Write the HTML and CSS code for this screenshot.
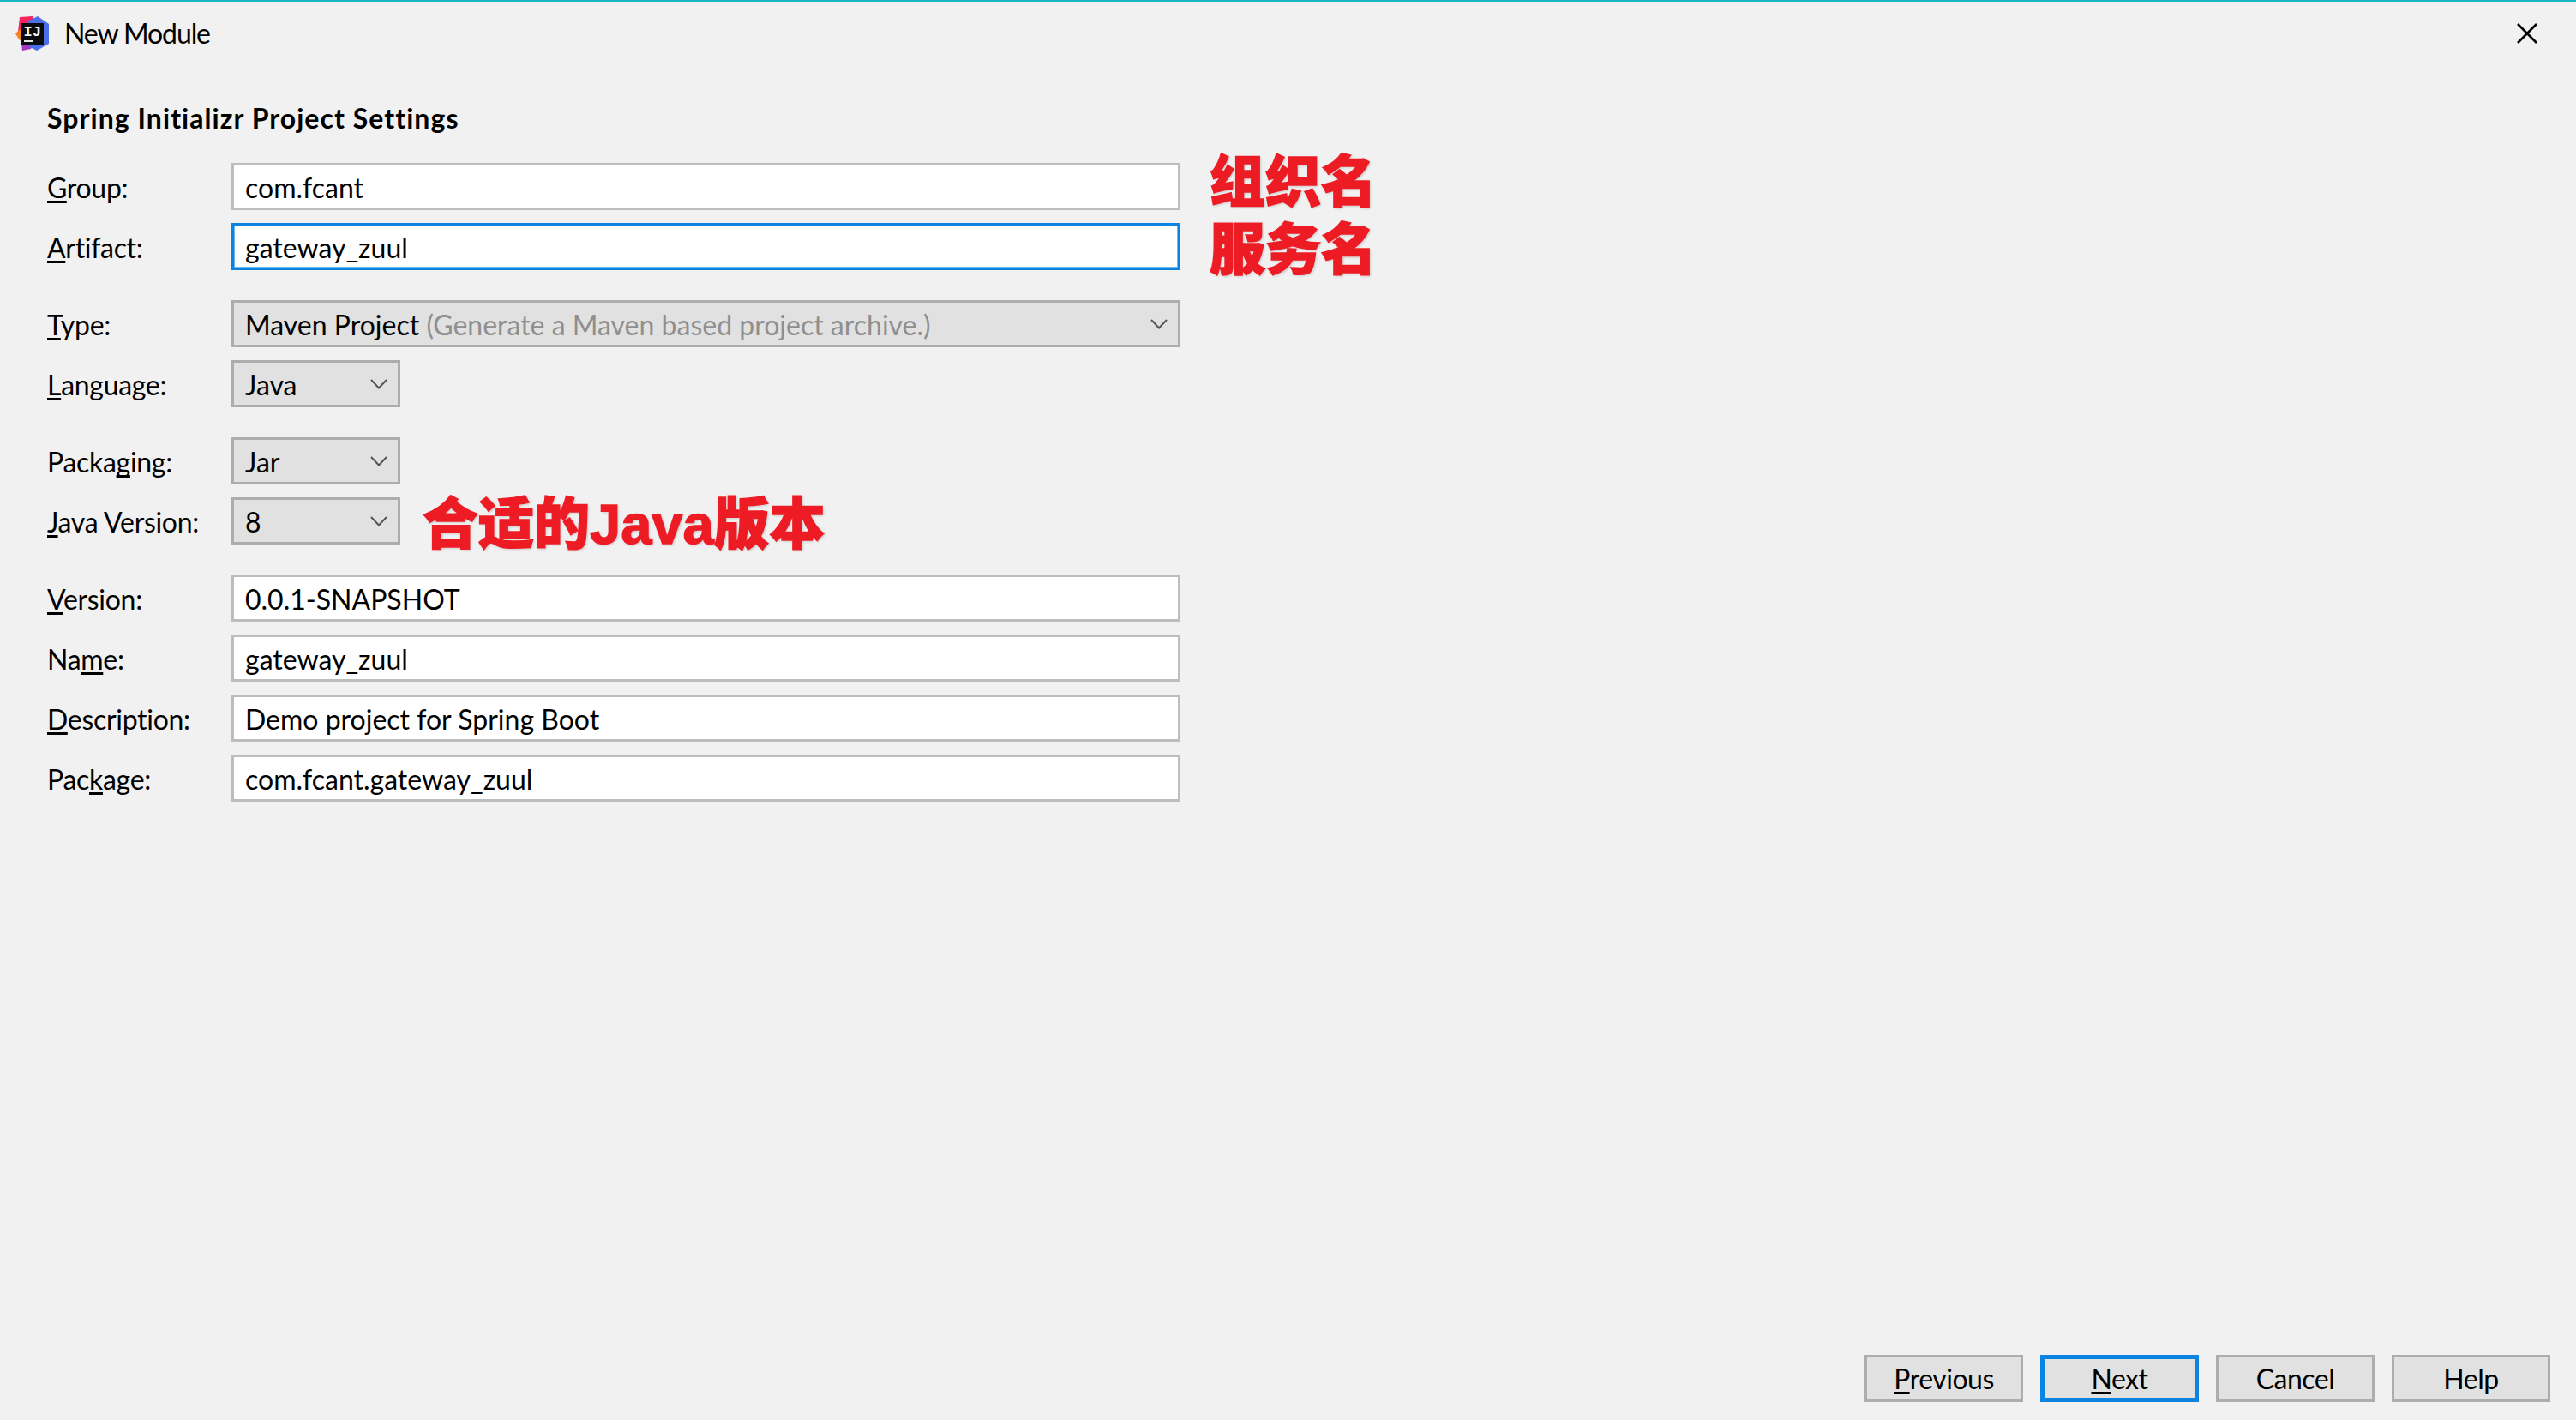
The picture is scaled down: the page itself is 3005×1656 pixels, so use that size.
FILE: index.html
```html
<!DOCTYPE html>
<html lang="en">
<head>
<meta charset="utf-8">
<title>New Module</title>
<link rel="stylesheet" href="styles.css">
</head>
<body>
<div class="dialog">
  <header class="titlebar">
    <svg class="logo" viewBox="0 0 40 40" width="40" height="40" aria-hidden="true">
      <polygon points="5,1 20,0 24,9 24,30 8,40 7,24 3,18" fill="#f5245f"/>
      <polygon points="0,20 7,14 9,30 4,27" fill="#f7821e"/>
      <polygon points="7,26 24,26 18,38 8,40" fill="#a23bc0"/>
      <polygon points="26,0 39,9 39,32 25,40 17,36 14,6" fill="#4a6fe8"/>
      <rect x="7" y="8" width="26" height="26" fill="#0b0b0d"/>
      <text x="9.5" y="23" class="logo-text">IJ</text>
      <rect x="10" y="28" width="10" height="2" fill="#e8e8e8"/>
    </svg>
    <span class="title">New Module</span>
    <svg class="close" viewBox="0 0 24 24" width="24" height="24" aria-hidden="true">
      <path d="M1 1 L23 23 M23 1 L1 23" fill="none" stroke="#000" stroke-width="2.6"/>
    </svg>
  </header>

  <h1 class="heading">Spring Initializr Project Settings</h1>

  <main class="form">
    <section class="group">
      <div class="row">
        <label class="label"><u>G</u>roup:</label>
        <div class="field wide">com.fcant</div>
        <span class="note note-group">组织名</span>
      </div>
      <div class="row">
        <label class="label"><u>A</u>rtifact:</label>
        <div class="field wide focused">gateway_zuul</div>
        <span class="note note-artifact">服务名</span>
      </div>
    </section>

    <section class="group">
      <div class="row">
        <label class="label"><u>T</u>ype:</label>
        <div class="combo wide">
          <span>Maven Project <span class="hint">(Generate a Maven based project archive.)</span></span>
          <svg class="chev" viewBox="0 0 20 12" width="20" height="12" aria-hidden="true"><path d="M1 1 L10 10.5 L19 1" fill="none" stroke="#555" stroke-width="2"/></svg>
        </div>
      </div>
      <div class="row">
        <label class="label"><u>L</u>anguage:</label>
        <div class="combo narrow">
          <span>Java</span>
          <svg class="chev" viewBox="0 0 20 12" width="20" height="12" aria-hidden="true"><path d="M1 1 L10 10.5 L19 1" fill="none" stroke="#555" stroke-width="2"/></svg>
        </div>
      </div>
    </section>

    <section class="group">
      <div class="row">
        <label class="label">Packa<u>g</u>ing:</label>
        <div class="combo narrow">
          <span>Jar</span>
          <svg class="chev" viewBox="0 0 20 12" width="20" height="12" aria-hidden="true"><path d="M1 1 L10 10.5 L19 1" fill="none" stroke="#555" stroke-width="2"/></svg>
        </div>
      </div>
      <div class="row">
        <label class="label"><u>J</u>ava Version:</label>
        <div class="combo narrow">
          <span>8</span>
          <svg class="chev" viewBox="0 0 20 12" width="20" height="12" aria-hidden="true"><path d="M1 1 L10 10.5 L19 1" fill="none" stroke="#555" stroke-width="2"/></svg>
        </div>
        <span class="note note-java">合适的Java版本</span>
      </div>
    </section>

    <section class="group">
      <div class="row">
        <label class="label"><u>V</u>ersion:</label>
        <div class="field wide">0.0.1-SNAPSHOT</div>
      </div>
      <div class="row">
        <label class="label">Na<u>m</u>e:</label>
        <div class="field wide">gateway_zuul</div>
      </div>
      <div class="row">
        <label class="label"><u>D</u>escription:</label>
        <div class="field wide">Demo project for Spring Boot</div>
      </div>
      <div class="row">
        <label class="label">Pac<u>k</u>age:</label>
        <div class="field wide">com.fcant.gateway_zuul</div>
      </div>
    </section>
  </main>

  <footer class="actions">
    <button class="btn"><u>P</u>revious</button>
    <button class="btn primary"><u>N</u>ext</button>
    <button class="btn">Cancel</button>
    <button class="btn">Help</button>
  </footer>
</div>
</body>
</html>
```

FILE: styles.css
```css
* { box-sizing: border-box; }
html, body { margin: 0; padding: 0; }
body {
  background: #f1f1f1;
  color: #000;
  font-family: "Lato", "Noto Sans", sans-serif;
  font-size: 32px;
  line-height: 38px;
}
u {
  text-decoration: underline;
  text-decoration-thickness: 3px;
  text-underline-offset: 3px;
  text-decoration-skip-ink: none;
}
.dialog {
  height: 1656px;
  display: flex;
  flex-direction: column;
  border-top: 2px solid #17b8c4;
  overflow: hidden;
}
.titlebar {
  height: 73px;
  display: flex;
  align-items: center;
  padding: 0 45px 0 18px;
}
.logo { flex: none; }
.logo-text {
  font-family: "Liberation Mono", monospace;
  font-weight: 700;
  font-size: 17px;
  fill: #f4f4f4;
}
.title {
  margin-left: 17px;
  letter-spacing: -1.1px;
}
.close { margin-left: auto; }
.heading {
  margin: 44px 0 0 55px;
  height: 38px;
  font-size: 32px;
  line-height: 38px;
  font-weight: 700;
  letter-spacing: 1.05px;
}
.form {
  margin-top: 33px;
  display: flex;
  flex-direction: column;
  gap: 35px;
}
.group {
  display: flex;
  flex-direction: column;
  gap: 15px;
}
.row {
  position: relative;
  display: flex;
  align-items: center;
  height: 55px;
}
.label {
  flex: none;
  width: 270px;
  padding: 2px 0 0 55px;
  letter-spacing: -0.3px;
}
.field, .combo {
  height: 55px;
  display: flex;
  align-items: center;
  padding: 2px 0 0 13px;
  border: 3px solid #bdbdbd;
  background: #fff;
}
.wide { width: 1107px; }
.narrow { width: 197px; }
.focused {
  border-color: #0a84e0;
  box-shadow: inset 0 0 0 1px #6db6ee;
}
.combo {
  justify-content: space-between;
  background: #e1e1e1;
  border-color: #adadad;
  padding-right: 12px;
}
.hint { color: #8f8f8f; }
.chev { flex: none; margin-top: -2px; }
.note {
  position: absolute;
  font-family: "Liberation Sans", "Noto Sans CJK SC", sans-serif;
  font-weight: 900;
  font-size: 65px;
  line-height: 66px;
  color: #ed1c24;
  -webkit-text-stroke: 1.5px #ed1c24;
  text-shadow: 0 0 2px #fff, 0 0 3px #fff, 1px 1px 3px #9a9a9a;
  white-space: nowrap;
}
.note-group { left: 1411px; top: -10px; }
.note-artifact { left: 1411px; top: -1px; }
.note-java { left: 493px; top: -1px; }
.actions {
  margin-top: auto;
  display: flex;
  justify-content: flex-end;
  gap: 20px;
  padding: 0 30px 21px 0;
}
.btn {
  width: 185px;
  height: 55px;
  padding: 0;
  border: 3px solid #adadad;
  border-radius: 0;
  background: #e1e1e1;
  color: #000;
  font: inherit;
  letter-spacing: -0.5px;
}
.primary { border: 5px solid #0a84e0; }
```
